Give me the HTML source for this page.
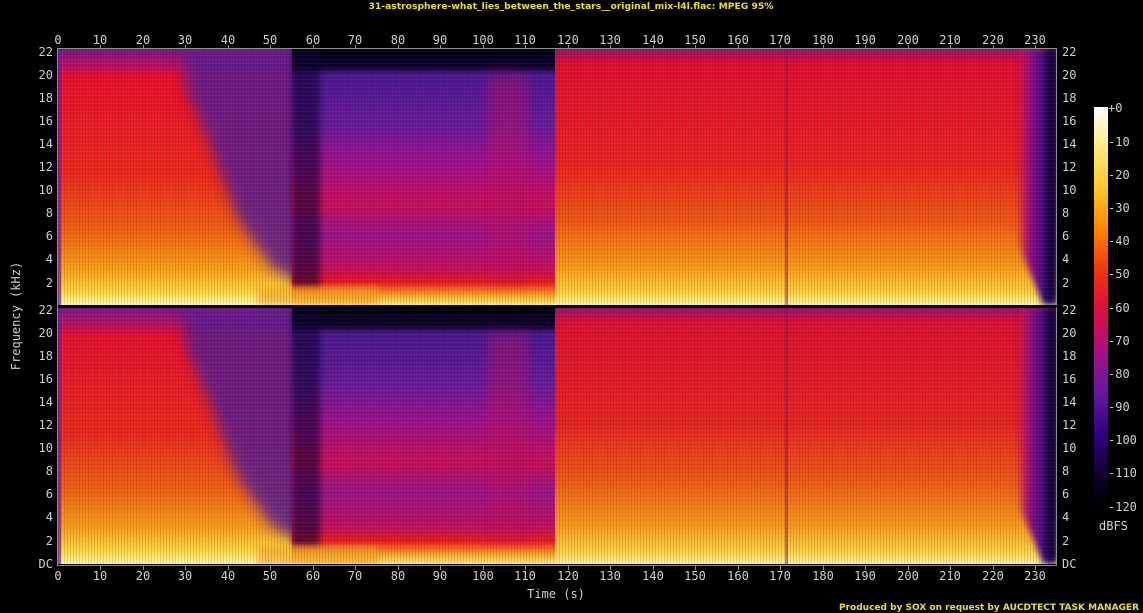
<!DOCTYPE html>
<html><head><meta charset="utf-8"><style>
html,body{margin:0;padding:0;background:#000;width:1143px;height:613px;overflow:hidden}
svg{display:block}
text{font-family:"DejaVu Sans Mono","Liberation Mono",monospace;font-size:12px;fill:#d0d0d0}
</style></head><body>
<svg width="1143" height="613" viewBox="0 0 1143 613" xmlns="http://www.w3.org/2000/svg">
<defs>
<filter id="bl" x="-20%" y="-20%" width="140%" height="140%"><feGaussianBlur stdDeviation="7"/></filter>
<filter id="bl2" x="-20%" y="-20%" width="140%" height="140%"><feGaussianBlur stdDeviation="3"/></filter>
<clipPath id="cp"><rect x="0" y="0" width="999" height="256"/></clipPath>
<linearGradient id="gA" x1="0" y1="0" x2="0" y2="1">
<stop offset="0" stop-color="#7a1888"/><stop offset="0.07" stop-color="#c0105a"/><stop offset="0.11" stop-color="#e8102c"/>
<stop offset="0.5" stop-color="#ec2a1c"/><stop offset="0.72" stop-color="#f26412"/><stop offset="0.86" stop-color="#f8a018"/>
<stop offset="0.95" stop-color="#fcd840"/><stop offset="1" stop-color="#fff8b0"/></linearGradient>
<linearGradient id="gF" x1="0" y1="0" x2="0" y2="1">
<stop offset="0" stop-color="#9a1070"/><stop offset="0.06" stop-color="#e01030"/><stop offset="0.45" stop-color="#e82420"/>
<stop offset="0.68" stop-color="#f05a14"/><stop offset="0.85" stop-color="#f89a18"/><stop offset="0.95" stop-color="#fcd040"/><stop offset="1" stop-color="#fff4a0"/></linearGradient>
<linearGradient id="gC" x1="0" y1="0" x2="0" y2="1">
<stop offset="0" stop-color="#000010"/><stop offset="0.07" stop-color="#100030"/><stop offset="0.1" stop-color="#4a1890"/>
<stop offset="0.3" stop-color="#6a1a98"/><stop offset="0.45" stop-color="#a0108a"/><stop offset="0.6" stop-color="#c8105a"/><stop offset="0.72" stop-color="#9a1488"/>
<stop offset="0.85" stop-color="#c01060"/><stop offset="0.91" stop-color="#e81820"/><stop offset="0.96" stop-color="#f8a020"/><stop offset="1" stop-color="#fff080"/></linearGradient>
<linearGradient id="gG" x1="0" y1="0" x2="1" y2="0">
<stop offset="0" stop-color="#e01030" stop-opacity="0"/><stop offset="0.35" stop-color="#a01080"/><stop offset="0.7" stop-color="#400a80"/><stop offset="1" stop-color="#100030"/></linearGradient>
<linearGradient id="cb" x1="0" y1="0" x2="0" y2="1">
<stop offset="0" stop-color="#ffffff"/><stop offset="0.08" stop-color="#fff090"/><stop offset="0.2" stop-color="#ffc828"/>
<stop offset="0.3" stop-color="#ff8a00"/><stop offset="0.4" stop-color="#f03a10"/><stop offset="0.5" stop-color="#e0103a"/>
<stop offset="0.62" stop-color="#a0108a"/><stop offset="0.72" stop-color="#6018a0"/><stop offset="0.82" stop-color="#300080"/>
<stop offset="0.92" stop-color="#100030"/><stop offset="1" stop-color="#000000"/></linearGradient>
<pattern id="stripes" width="3" height="4" patternUnits="userSpaceOnUse"><rect width="1" height="4" fill="#000" opacity="0.12"/><rect y="2" width="3" height="1" fill="#fff" opacity="0.05"/></pattern>
<g id="ch">
<g clip-path="url(#cp)">
<rect x="0" y="0" width="999" height="256" fill="url(#gA)"/>
<polygon points="125,0 250,0 250,235 215,220 180,170 150,90 128,40" fill="#5a1a90" opacity="0.85" filter="url(#bl)"/>
<rect x="234" y="0" width="264" height="256" fill="url(#gC)"/>
<polygon points="234,0 262,0 262,238 234,238" fill="#100030" opacity="0.6" filter="url(#bl2)"/>
<rect x="430" y="25" width="40" height="205" fill="#c01060" opacity="0.45" filter="url(#bl)"/>
<rect x="200" y="238" width="120" height="18" fill="#f6a020" opacity="0.6" filter="url(#bl2)"/>
<rect x="497" y="0" width="502" height="256" fill="url(#gF)"/>
<rect x="727" y="0" width="3" height="256" fill="#8a1060" opacity="0.5"/>
<polygon points="955,0 999,0 999,256 985,256 975,230 962,200" fill="url(#gG)" filter="url(#bl2)"/>
<rect x="988" y="0" width="11" height="250" fill="#100038" opacity="0.6" filter="url(#bl2)"/>
<rect x="0" y="0" width="3" height="256" fill="#6a1890" opacity="0.7"/>
<rect x="0" y="0" width="999" height="256" fill="url(#stripes)"/>
</g>
</g>
</defs>
<text x="571" y="9" text-anchor="middle" style="font-family:'DejaVu Sans','Liberation Sans',sans-serif;font-size:9.2px;font-weight:bold;fill:#e8e020">31-astrosphere-what_lies_between_the_stars__original_mix-l4l.flac: MPEG 95%</text>
<use href="#ch" x="58" y="49"/>
<use href="#ch" x="58" y="308"/>
<rect x="57.5" y="48.5" width="999" height="517" fill="none" stroke="#909090" stroke-width="1"/>
<line x1="58" y1="306.5" x2="1057" y2="306.5" stroke="#000" stroke-width="2"/>
<g stroke="#909090" stroke-width="1">
<path d="M100.5,45V49M143.5,45V49M185.5,45V49M228.5,45V49M270.5,45V49M313.5,45V49M355.5,45V49M398.5,45V49M440.5,45V49M483.5,45V49M525.5,45V49M568.5,45V49M610.5,45V49M653.5,45V49M695.5,45V49M738.5,45V49M780.5,45V49M823.5,45V49M865.5,45V49M908.5,45V49M950.5,45V49M993.5,45V49M1035.5,45V49"/>
<path d="M100.5,566V570M143.5,566V570M185.5,566V570M228.5,566V570M270.5,566V570M313.5,566V570M355.5,566V570M398.5,566V570M440.5,566V570M483.5,566V570M525.5,566V570M568.5,566V570M610.5,566V570M653.5,566V570M695.5,566V570M738.5,566V570M780.5,566V570M823.5,566V570M865.5,566V570M908.5,566V570M950.5,566V570M993.5,566V570M1035.5,566V570"/>
</g>
<g text-anchor="middle">
<text x="58" y="44">0</text><text x="100" y="44">10</text><text x="143" y="44">20</text><text x="185" y="44">30</text><text x="228" y="44">40</text><text x="270" y="44">50</text><text x="313" y="44">60</text><text x="355" y="44">70</text><text x="398" y="44">80</text><text x="440" y="44">90</text><text x="483" y="44">100</text><text x="525" y="44">110</text><text x="568" y="44">120</text><text x="610" y="44">130</text><text x="653" y="44">140</text><text x="695" y="44">150</text><text x="738" y="44">160</text><text x="780" y="44">170</text><text x="823" y="44">180</text><text x="865" y="44">190</text><text x="908" y="44">200</text><text x="950" y="44">210</text><text x="993" y="44">220</text><text x="1035" y="44">230</text>
<text x="58" y="580">0</text><text x="100" y="580">10</text><text x="143" y="580">20</text><text x="185" y="580">30</text><text x="228" y="580">40</text><text x="270" y="580">50</text><text x="313" y="580">60</text><text x="355" y="580">70</text><text x="398" y="580">80</text><text x="440" y="580">90</text><text x="483" y="580">100</text><text x="525" y="580">110</text><text x="568" y="580">120</text><text x="610" y="580">130</text><text x="653" y="580">140</text><text x="695" y="580">150</text><text x="738" y="580">160</text><text x="780" y="580">170</text><text x="823" y="580">180</text><text x="865" y="580">190</text><text x="908" y="580">200</text><text x="950" y="580">210</text><text x="993" y="580">220</text><text x="1035" y="580">230</text>
</g>
<g text-anchor="end">
<text x="53" y="56">22</text><text x="53" y="79">20</text><text x="53" y="102">18</text><text x="53" y="125">16</text><text x="53" y="148">14</text><text x="53" y="171">12</text><text x="53" y="194">10</text><text x="53" y="217">8</text><text x="53" y="240">6</text><text x="53" y="263">4</text><text x="53" y="287">2</text>
<text x="53" y="314">22</text><text x="53" y="337">20</text><text x="53" y="360">18</text><text x="53" y="383">16</text><text x="53" y="406">14</text><text x="53" y="429">12</text><text x="53" y="452">10</text><text x="53" y="475">8</text><text x="53" y="498">6</text><text x="53" y="521">4</text><text x="53" y="545">2</text><text x="53" y="568">DC</text>
</g>
<g>
<text x="1062" y="56">22</text><text x="1062" y="79">20</text><text x="1062" y="102">18</text><text x="1062" y="125">16</text><text x="1062" y="148">14</text><text x="1062" y="171">12</text><text x="1062" y="194">10</text><text x="1062" y="217">8</text><text x="1062" y="240">6</text><text x="1062" y="263">4</text><text x="1062" y="287">2</text>
<text x="1062" y="314">22</text><text x="1062" y="337">20</text><text x="1062" y="360">18</text><text x="1062" y="383">16</text><text x="1062" y="406">14</text><text x="1062" y="429">12</text><text x="1062" y="452">10</text><text x="1062" y="475">8</text><text x="1062" y="498">6</text><text x="1062" y="521">4</text><text x="1062" y="545">2</text><text x="1062" y="568">DC</text>
</g>
<text x="20" y="316" text-anchor="middle" transform="rotate(-90 20 316)">Frequency (kHz)</text>
<text x="556" y="598" text-anchor="middle">Time (s)</text>
<rect x="1094" y="107" width="14" height="400" fill="url(#cb)"/>
<g>
<text x="1108" y="112">+0</text><text x="1108" y="146">-10</text><text x="1108" y="179">-20</text><text x="1108" y="212">-30</text><text x="1108" y="245">-40</text><text x="1108" y="278">-50</text><text x="1108" y="312">-60</text><text x="1108" y="345">-70</text><text x="1108" y="378">-80</text><text x="1108" y="411">-90</text><text x="1108" y="444">-100</text><text x="1108" y="477">-110</text><text x="1108" y="511">-120</text>
</g>
<text x="1099" y="530">dBFS</text>
<text x="1139" y="610" text-anchor="end" style="font-family:'DejaVu Sans','Liberation Sans',sans-serif;font-size:9px;font-weight:bold;fill:#e8e020">Produced by SOX on request by AUCDTECT TASK MANAGER</text>
</svg>
</body></html>
